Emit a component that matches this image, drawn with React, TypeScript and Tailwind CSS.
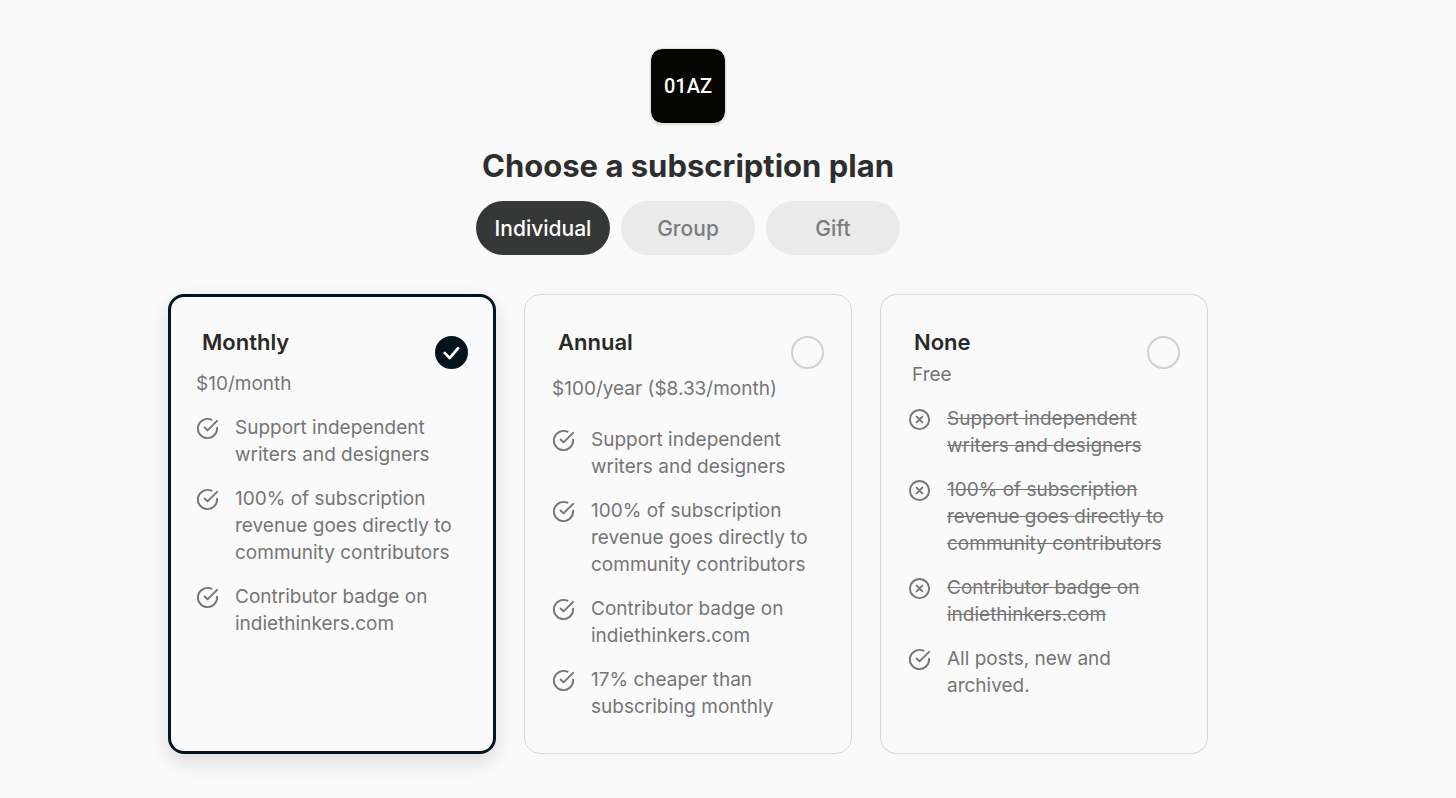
import { useState } from "react";
import { clsx } from "clsx";

type Feature = { text: string; included: boolean };

type Plan = {
  id: string;
  name: string;
  price: string;
  priceClass: string;
  listClass: string;
  features: Feature[];
};

const AUDIENCES = ["Individual", "Group", "Gift"];

const PLANS: Plan[] = [
  {
    id: "monthly",
    name: "Monthly",
    price: "$10/month",
    priceClass: "mt-[14px]",
    listClass: "mt-[17px]",
    features: [
      { text: "Support independent writers and designers", included: true },
      { text: "100% of subscription revenue goes directly to community contributors", included: true },
      { text: "Contributor badge on indiethinkers.com", included: true },
    ],
  },
  {
    id: "annual",
    name: "Annual",
    price: "$100/year ($8.33/month)",
    priceClass: "mt-[19px]",
    listClass: "mt-6",
    features: [
      { text: "Support independent writers and designers", included: true },
      { text: "100% of subscription revenue goes directly to community contributors", included: true },
      { text: "Contributor badge on indiethinkers.com", included: true },
      { text: "17% cheaper than subscribing monthly", included: true },
    ],
  },
  {
    id: "none",
    name: "None",
    price: "Free",
    priceClass: "mt-[5px] pl-1",
    listClass: "mt-[17px]",
    features: [
      { text: "Support independent writers and designers", included: false },
      { text: "100% of subscription revenue goes directly to community contributors", included: false },
      { text: "Contributor badge on indiethinkers.com", included: false },
      { text: "All posts, new and archived.", included: true },
    ],
  },
];

function FeatureIcon({ included }: { included: boolean }) {
  return (
    <svg
      viewBox="0 0 24 24"
      fill="none"
      stroke="currentColor"
      strokeWidth="2"
      strokeLinecap="round"
      strokeLinejoin="round"
      aria-hidden="true"
      className="mt-[3px] size-[23px] shrink-0"
    >
      {included ? (
        <>
          <path d="M22 11.08V12a10 10 0 1 1-5.93-9.14" />
          <path d="M22 4 12 14.01l-3-3" />
        </>
      ) : (
        <>
          <circle cx="12" cy="12" r="10" />
          <path d="m15 9-6 6M9 9l6 6" />
        </>
      )}
    </svg>
  );
}

function PlanCard({ plan, selected, onSelect }: { plan: Plan; selected: boolean; onSelect: () => void }) {
  return (
    <div
      className={clsx(
        "rounded-2xl",
        selected
          ? "border-3 border-[#03131d] pt-[31px] pr-[25px] pb-[30px] pl-[25px] shadow-[0_8px_20px_rgba(0,0,0,0.12)]"
          : "border border-[#d8d8d8] pt-[33px] pr-[27px] pb-[33px] pl-[27px]",
      )}
    >
      <div className="flex items-start justify-between">
        <div>
          <label htmlFor={plan.id} className="block cursor-pointer pl-[6px] text-[22px] leading-7 font-semibold text-[#292929]">
            {plan.name}
          </label>
          <p className={clsx("whitespace-nowrap", plan.priceClass)}>{plan.price}</p>
        </div>
        <div className="relative mt-2 size-[33px] shrink-0">
          <input
            type="radio"
            id={plan.id}
            name="plan"
            checked={selected}
            onChange={onSelect}
            className="block size-full cursor-pointer appearance-none rounded-full border-2 border-[#d0d0d0] checked:border-[#03131d] checked:bg-[#03131d]"
          />
          {selected && (
            <svg
              viewBox="0 0 33 33"
              fill="none"
              stroke="white"
              strokeWidth="2.8"
              strokeLinecap="round"
              strokeLinejoin="round"
              aria-hidden="true"
              className="pointer-events-none absolute inset-0"
            >
              <path d="m9.7 16.9 5 5.2L23.1 12.2" />
            </svg>
          )}
        </div>
      </div>
      <ul className={clsx("flex flex-col gap-[17px]", plan.listClass)}>
        {plan.features.map((feature) => (
          <li key={feature.text} className="flex gap-4">
            <FeatureIcon included={feature.included} />
            <span className={clsx(!feature.included && "line-through")}>{feature.text}</span>
          </li>
        ))}
      </ul>
    </div>
  );
}

export default function App() {
  const [audience, setAudience] = useState("Individual");
  const [planId, setPlanId] = useState("monthly");

  return (
    <main className="min-h-screen bg-[#fafafa] pt-12 pr-20 pb-11 font-['Inter',sans-serif] text-[19px] leading-[27px] text-[#757575]">
      <div className="mx-auto flex max-w-[1040px] flex-col items-center">
        <div className="flex size-[76px] items-center justify-center rounded-xl border border-[#e2e2e2] bg-[#050602] bg-clip-padding font-['Roboto',sans-serif] text-xl font-medium text-white shadow-sm">
          01AZ
        </div>
        <h1 className="mt-[22px] text-[31px] leading-10 font-bold text-[#2d2f2f]">Choose a subscription plan</h1>
        <div role="tablist" className="mt-[15px] flex gap-[11px]">
          {AUDIENCES.map((name) => (
            <button
              key={name}
              type="button"
              role="tab"
              aria-selected={audience === name}
              onClick={() => setAudience(name)}
              className={clsx(
                "h-[54px] w-[134px] cursor-pointer rounded-full text-[21px] font-medium",
                audience === name ? "bg-[#363737] text-white" : "bg-[#eaeaea] text-[#7c7c7c]",
              )}
            >
              {name}
            </button>
          ))}
        </div>
        <div className="mt-[39px] grid w-full gap-7 md:grid-cols-3">
          {PLANS.map((plan) => (
            <PlanCard key={plan.id} plan={plan} selected={planId === plan.id} onSelect={() => setPlanId(plan.id)} />
          ))}
        </div>
      </div>
    </main>
  );
}
